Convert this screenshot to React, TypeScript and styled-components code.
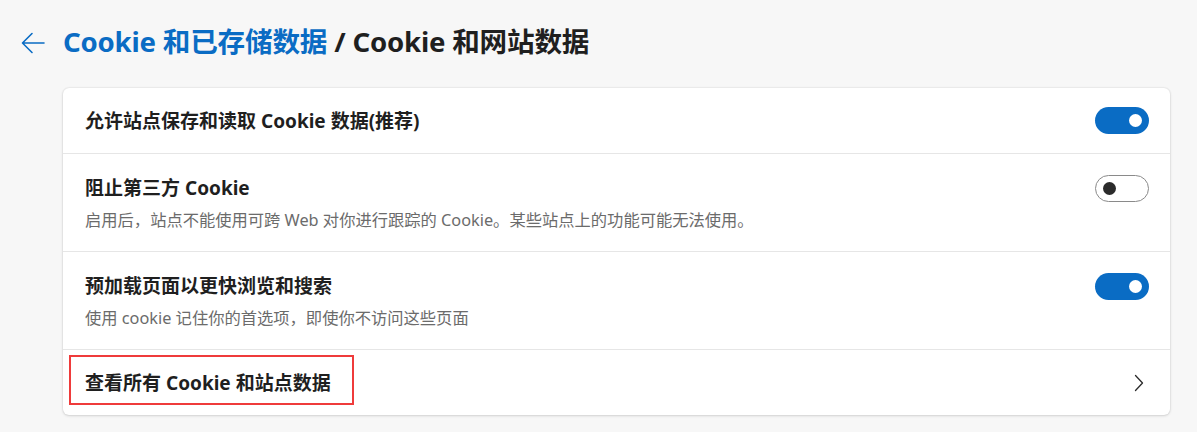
import styled, { createGlobalStyle } from "styled-components";

const GlobalStyle = createGlobalStyle`
  html, body {
    margin: 0;
    padding: 0;
    background: #f7f7f7;
  }
  body {
    font-family: "Noto Sans", "Noto Sans CJK SC", sans-serif;
    color: #1b1b1b;
  }
`;

const settings = [
  {
    title: "允许站点保存和读取 Cookie 数据(推荐)",
    on: true,
  },
  {
    title: "阻止第三方 Cookie",
    desc: "启用后，站点不能使用可跨 Web 对你进行跟踪的 Cookie。某些站点上的功能可能无法使用。",
    on: false,
  },
  {
    title: "预加载页面以更快浏览和搜索",
    desc: "使用 cookie 记住你的首选项，即使你不访问这些页面",
    on: true,
  },
];

function App() {
  return (
    <Page>
      <GlobalStyle />
      <Header>
        <BackButton aria-label="返回">
          <svg width="24" height="22" viewBox="0 0 24 22" fill="none">
            <path
              d="M23 11H2M11 1.5L1.5 11L11 20.5"
              stroke="#0a6cc4"
              strokeWidth="1.6"
              strokeLinecap="round"
              strokeLinejoin="round"
            />
          </svg>
        </BackButton>
        <Title>
          <Crumb>Cookie 和已存储数据</Crumb> / Cookie 和网站数据
        </Title>
      </Header>
      <Card>
        {settings.map((s) => (
          <Row key={s.title} $tall={!!s.desc}>
            <Text>
              <RowTitle>{s.title}</RowTitle>
              {s.desc && <RowDesc>{s.desc}</RowDesc>}
            </Text>
            <Toggle $on={s.on}>
              <Knob $on={s.on} />
            </Toggle>
          </Row>
        ))}
        <Row $tall={false} $last>
          <Text>
            <Highlighted>查看所有 Cookie 和站点数据</Highlighted>
          </Text>
          <Chevron>
            <svg width="10" height="18" viewBox="0 0 10 18" fill="none">
              <path
                d="M1.5 1.5L8.5 9L1.5 16.5"
                stroke="#2b2b2b"
                strokeWidth="1.3"
                strokeLinecap="round"
                strokeLinejoin="round"
              />
            </svg>
          </Chevron>
        </Row>
      </Card>
    </Page>
  );
}

export default App;

const Page = styled.div`
  padding: 20px 27px 17px 20px;
`;

const Header = styled.div`
  display: flex;
  align-items: center;
  height: 42px;
  margin-bottom: 26px;
`;

const BackButton = styled.div`
  width: 42px;
  display: flex;
  align-items: center;
  padding-left: 1px;
  padding-top: 3px;
`;

const Title = styled.h1`
  margin: 0;
  font-size: 27.6px;
  font-weight: 700;
  line-height: 40px;
  height: 40px;
  color: #1f1f1f;
  letter-spacing: -0.2px;
`;

const Crumb = styled.span`
  color: #0a6cc4;
`;

const Card = styled.div`
  margin-left: 43px;
  background: #ffffff;
  border-radius: 6px;
  box-shadow: 0 0 2px rgba(0, 0, 0, 0.14), 0 1px 3px rgba(0, 0, 0, 0.12);
`;

const Row = styled.div<{ $tall: boolean; $last?: boolean }>`
  display: flex;
  align-items: ${(p) => (p.$tall ? "flex-start" : "center")};
  justify-content: space-between;
  height: ${(p) => (p.$tall ? "98px" : p.$last ? "66px" : "65px")};
  box-sizing: border-box;
  padding: ${(p) => (p.$tall ? "21px 21px 0 22px" : "0 21px 0 22px")};
  border-top: 1px solid #e6e6e6;

  &:first-child {
    border-top: none;
    height: 65px;
  }
`;

const Text = styled.div`
  display: flex;
  flex-direction: column;
  gap: 7px;
`;

const RowTitle = styled.div`
  font-size: 19px;
  font-weight: 700;
  line-height: 26px;
  height: 26px;
  color: #1f1f1f;
`;

const RowDesc = styled.div`
  font-size: 16.3px;
  line-height: 24px;
  height: 24px;
  color: #6b6b6b;
`;

const Highlighted = styled(RowTitle)`
  position: relative;

  &::after {
    content: "";
    position: absolute;
    left: -16px;
    right: -23px;
    top: -15px;
    bottom: -9px;
    border: 2.5px solid #ef3b3b;
  }
`;

const Toggle = styled.div<{ $on: boolean }>`
  box-sizing: border-box;
  width: 54px;
  height: 27px;
  border-radius: 14px;
  flex-shrink: 0;
  background: ${(p) => (p.$on ? "#0a6cc4" : "#ffffff")};
  border: ${(p) => (p.$on ? "none" : "1px solid #8a8a8a")};
  display: flex;
  align-items: center;
  justify-content: ${(p) => (p.$on ? "flex-end" : "flex-start")};
  padding: 0 7px;
`;

const Knob = styled.div<{ $on: boolean }>`
  width: 13px;
  height: 13px;
  border-radius: 50%;
  background: ${(p) => (p.$on ? "#ffffff" : "#2b2b2b")};
`;

const Chevron = styled.div`
  display: flex;
  align-items: center;
  padding-right: 5px;
`;
